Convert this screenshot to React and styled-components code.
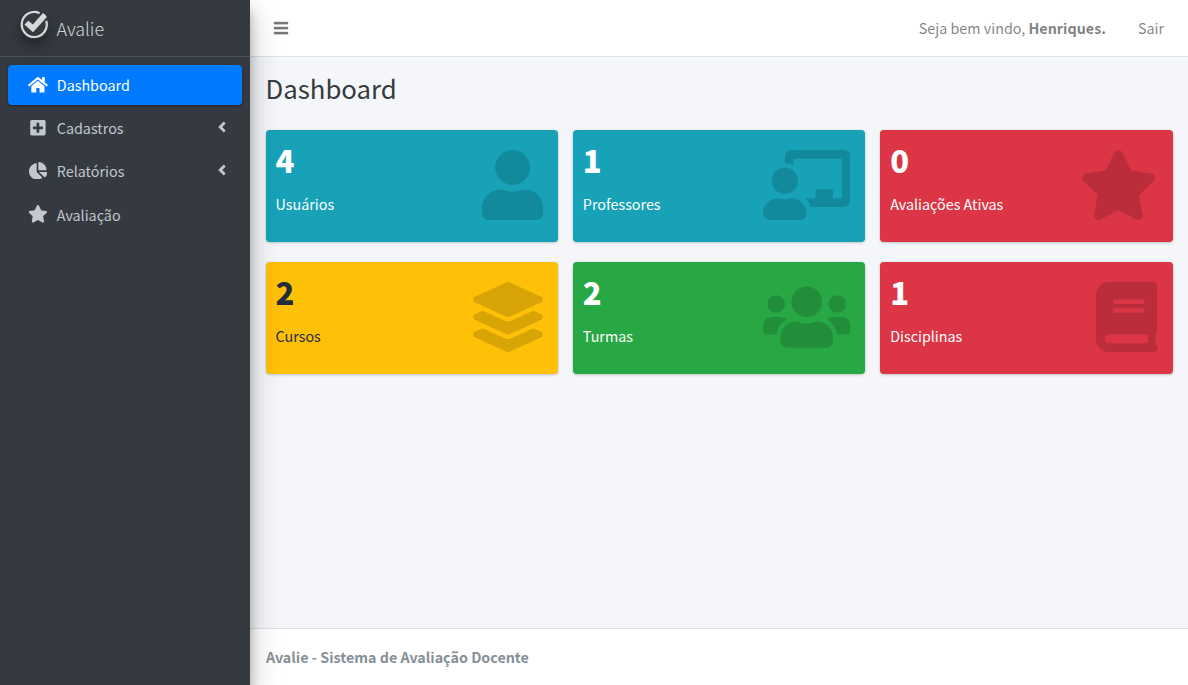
import React from "react";
import styled, { createGlobalStyle } from "styled-components";
import {
  FaAngleLeft, FaBars, FaBook, FaChalkboardTeacher, FaChartPie, FaHome,
  FaLayerGroup, FaPlusSquare, FaStar, FaUser, FaUsers,
} from "react-icons/fa";

const GlobalStyle = createGlobalStyle`
  * { box-sizing: border-box; }
  body {
    margin: 0;
    font-family: "Noto Sans CJK JP", "Noto Sans", sans-serif;
    font-size: 14.33px;
    line-height: 24px;
    color: #212529;
  }
  h1, h3, p { margin: 0; }
  a { color: inherit; text-decoration: none; }
`;

const Shell = styled.div`
  display: flex;
  min-height: 100vh;
  background: #f4f6f9;
`;

const Sidebar = styled.aside`
  position: relative;
  z-index: 2;
  flex: 0 0 250px;
  background: #343a40;
  box-shadow: 0 14px 28px rgba(0, 0, 0, 0.25), 0 10px 10px rgba(0, 0, 0, 0.22);
`;

const Brand = styled.a`
  display: flex;
  align-items: flex-start;
  height: 57px;
  padding: 10px 8px 0 20px;
  border-bottom: 1px solid #4b545c;
  color: rgba(255, 255, 255, 0.8);
`;

const BrandLogo = styled.svg`
  width: 29px;
  height: 29px;
  border-radius: 50%;
  opacity: 0.8;
  box-shadow: 0 10px 20px rgba(0, 0, 0, 0.19), 0 6px 6px rgba(0, 0, 0, 0.23);
`;

const BrandName = styled.span`
  margin: 3px 0 0 7.5px;
  font-size: 17.9px;
  font-weight: 300;
  line-height: 30px;
`;

const Menu = styled.nav`
  display: flex;
  flex-direction: column;
  gap: 3.2px;
  padding: 8px;
`;

const MenuLink = styled.a`
  display: flex;
  height: 40px;
  padding: 8px 16px;
  border-radius: 4px;
  color: ${(p) => (p.$active ? "#fff" : "#c2c7d0")};
  background: ${(p) => (p.$active ? "#007bff" : "transparent")};
  box-shadow: ${(p) => (p.$active ? "0 1px 3px rgba(0,0,0,.12), 0 1px 2px rgba(0,0,0,.24)" : "none")};
`;

const MenuIcon = styled.span`
  display: flex;
  justify-content: center;
  width: 25.6px;
  margin: 2.5px 6px 0 1.2px;
  font-size: 17.6px;
  svg { flex: none; width: ${(p) => p.$ratio}em; }
`;

const MenuArrow = styled.span`
  display: flex;
  margin: 3px -4px 0 auto;
  font-size: 16px;
  svg { stroke: currentColor; stroke-width: 16px; }
`;

const Main = styled.div`
  display: flex;
  flex: 1;
  flex-direction: column;
`;

const Navbar = styled.header`
  display: flex;
  align-items: center;
  gap: 32px;
  height: 57px;
  padding: 0 24px;
  border-bottom: 1px solid #dee2e6;
  background: #fff;
  color: rgba(0, 0, 0, 0.5);
`;

const Toggle = styled.a`
  display: flex;
  margin: 0 auto 0 -1px;
  font-size: 16px;
  svg { stroke: currentColor; stroke-width: 10px; }
`;

const Content = styled.main`
  flex: 1;
  padding: 14px 15.5px;
`;

const Title = styled.h1`
  margin-bottom: 24px;
  color: #343a40;
  font-size: 25.75px;
  font-weight: 400;
  line-height: 34.56px;
`;

const Cards = styled.section`
  display: grid;
  grid-template-columns: repeat(3, 1fr);
  gap: 20px 15px;
`;

const Card = styled.article`
  display: flex;
  justify-content: space-between;
  height: 112.2px;
  padding: 9px 15px 0 10px;
  border-radius: 4px;
  background: ${(p) => p.$color};
  color: ${(p) => (p.$dark ? "#1f2d3d" : "#fff")};
  box-shadow: 0 0 1px rgba(0, 0, 0, 0.125), 0 1px 3px rgba(0, 0, 0, 0.2);
`;

const CardValue = styled.h3`
  margin-bottom: 11px;
  font-size: 31px;
  font-weight: 900;
  line-height: 42.24px;
`;

const CardIcon = styled.div`
  display: flex;
  width: ${(p) => p.$ratio * 70}px;
  height: 70px;
  margin-top: 11px;
  color: rgba(0, 0, 0, 0.15);
  svg { width: 100%; height: 100%; }
`;

const Footer = styled.footer`
  height: 57px;
  padding: 16px;
  border-top: 1px solid #dee2e6;
  background: #fff;
  color: #869099;
  font-size: 14.3px;
  font-weight: 700;
`;

const menu = [
  { label: "Dashboard", Icon: FaHome, ratio: 1.125, active: true },
  { label: "Cadastros", Icon: FaPlusSquare, ratio: 0.9, nested: true },
  { label: "Relatórios", Icon: FaChartPie, ratio: 1.0625, nested: true },
  { label: "Avaliação", Icon: FaStar, ratio: 1.125 },
];

const cards = [
  { value: 4, label: "Usuários", Icon: FaUser, ratio: 0.875, color: "#17a2b8" },
  { value: 1, label: "Professores", Icon: FaChalkboardTeacher, ratio: 1.25, color: "#17a2b8" },
  { value: 0, label: "Avaliações Ativas", Icon: FaStar, ratio: 1.125, color: "#dc3545" },
  { value: 2, label: "Cursos", Icon: FaLayerGroup, ratio: 1, color: "#ffc107", dark: true },
  { value: 2, label: "Turmas", Icon: FaUsers, ratio: 1.25, color: "#28a745" },
  { value: 1, label: "Disciplinas", Icon: FaBook, ratio: 0.875, color: "#dc3545" },
];

export default function App() {
  return (
    <Shell>
      <GlobalStyle />
      <Sidebar>
        <Brand href="#">
          <BrandLogo viewBox="0 0 29 29" fill="none">
            <path d="M19.6 3.2A12.5 12.5 0 1 0 26.2 10.8" stroke="#fff" strokeWidth="2.2" />
            <path d="M4.4 14.6L8.4 10.8L12.8 14.4L23.4 2.6L27.4 6.4L13 22.3Z" fill="#fff" />
          </BrandLogo>
          <BrandName>Avalie</BrandName>
        </Brand>
        <Menu>
          {menu.map(({ label, Icon, ratio, active, nested }) => (
            <MenuLink key={label} href="#" $active={active}>
              <MenuIcon $ratio={ratio}><Icon /></MenuIcon>
              {label}
              {nested && <MenuArrow><FaAngleLeft /></MenuArrow>}
            </MenuLink>
          ))}
        </Menu>
      </Sidebar>
      <Main>
        <Navbar>
          <Toggle href="#"><FaBars /></Toggle>
          <span>Seja bem vindo, <b>Henriques.</b></span>
          <a href="#">Sair</a>
        </Navbar>
        <Content>
          <Title>Dashboard</Title>
          <Cards>
            {cards.map(({ value, label, Icon, ratio, color, dark }) => (
              <Card key={label} $color={color} $dark={dark}>
                <div>
                  <CardValue>{value}</CardValue>
                  <p>{label}</p>
                </div>
                <CardIcon $ratio={ratio}><Icon /></CardIcon>
              </Card>
            ))}
          </Cards>
        </Content>
        <Footer>Avalie - Sistema de Avaliação Docente</Footer>
      </Main>
    </Shell>
  );
}
